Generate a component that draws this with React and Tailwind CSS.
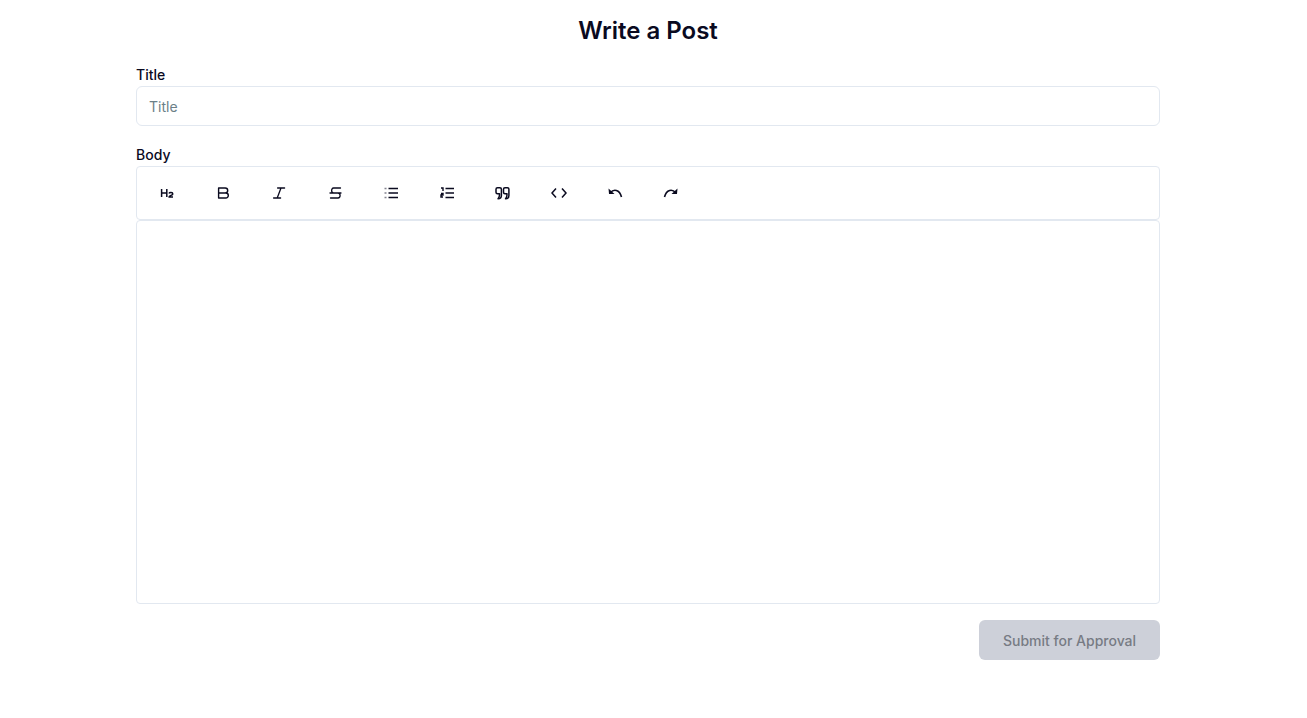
import React from "react";

const Svg = ({ children }) => (
  <svg
    width="16"
    height="16"
    viewBox="0 0 16 16"
    fill="none"
    stroke="currentColor"
    strokeWidth="1.3"
    strokeLinecap="round"
    strokeLinejoin="round"
  >
    {children}
  </svg>
);

// toolbar icons, drawn to match the editor's glyph set
const tools = [
  <Svg>
    <path d="M2.600 4v8M7.800 4v8M2.600 8h5.200" strokeWidth="1.500" strokeLinecap="butt" />
    <path d="M10 8.400c.4-1.200 3.800-1.200 3.800.5 0 1.400-3.600 1.500-3.800 3.100h4" strokeWidth="1.500" strokeLinecap="butt" />
  </Svg>,
  <Svg>
    <path d="M3.600 3h6.600a2.500 2.500 0 0 1 0 5H3.600zM3.600 8h7.200a2.500 2.500 0 0 1 0 5H3.600z" strokeWidth="1.400" />
  </Svg>,
  <Svg>
    <path d="M6.600 3h7M2.600 13h7M10 3 6.200 13" />
  </Svg>,
  <Svg>
    <path d="M13.500 3H6.500C4 3 4 7.800 6.500 7.800M3 8h11M11 8c2.800.2 2.800 5 0 5H3.500" />
  </Svg>,
  <Svg>
    <path d="M5.500 3.500h9.500M5.500 8h9.500M5.500 12.500h9.500" strokeWidth="1.500" strokeLinecap="butt" />
    <path d="M1.500 3.500h2M1.500 8h2M1.500 12.500h2" strokeWidth="1.500" strokeLinecap="butt" strokeOpacity="0.5" />
  </Svg>,
  <Svg>
    <path d="M6.500 3.500h8.500M6.500 8h8.500M6.500 12.500h8.500" strokeWidth="1.500" strokeLinecap="butt" />
    <path d="M2 3h2v3M2 8.500h2v1.500H2v2h2" strokeWidth="1.400" strokeLinecap="butt" strokeLinejoin="miter" />
  </Svg>,
  <Svg>
    <g strokeWidth="1.500">
      <path d="M2.500 2.800h2.400c.9 0 1.500.6 1.500 1.500v6.200c0 2-1.400 3.300-3.400 3.300l1-1.600c.5-.8.500-2.400.5-3.400H2.500c-.9 0-1.500-.6-1.500-1.500V4.300c0-.9.6-1.500 1.500-1.500z" />
      <path d="M10 2.800h2.400c.9 0 1.500.6 1.500 1.500v6.200c0 2-1.400 3.300-3.400 3.300l1-1.600c.5-.8.500-2.400.5-3.400H10c-.9 0-1.500-.6-1.500-1.500V4.300c0-.9.6-1.500 1.500-1.500z" />
    </g>
  </Svg>,
  <Svg>
    <path d="M5 3.500 1 8l4 4.500M11 3.500 15 8l-4 4.500" strokeWidth="1.500" strokeLinecap="butt" strokeLinejoin="miter" />
  </Svg>,
  <Svg>
    <path d="M3.500 7.500C6.500 4 12.500 4 14.500 12" strokeWidth="1.600" strokeLinecap="butt" />
    <path d="M1.500 3.500l.5 5.500H7.500z" fill="currentColor" stroke="none" />
  </Svg>,
  <Svg>
    <path d="M12.500 7.500C9.500 4 3.500 4 1.500 12" strokeWidth="1.600" strokeLinecap="butt" />
    <path d="M14.500 3.500l-.5 5.500H8.500z" fill="currentColor" stroke="none" />
  </Svg>,
];

const App = () => {
  return (
    <div className="w-[1296px] min-h-[718px] bg-white font-['Inter',sans-serif]">
      <div className="max-w-5xl mx-auto pt-4">
        <h1 className="text-2xl font-semibold text-center text-[#0a0a1f] leading-[30px] mb-[19px]">
          Write a Post
        </h1>

        <label className="block text-sm font-medium text-[#0a0a1f] leading-5">Title</label>
        <input
          placeholder="Title"
          className="mt-[1px] w-full h-10 px-3 text-sm border border-[#e2e8f0] rounded-md outline-none placeholder:text-[#6b8088]"
        />

        <label className="block text-sm font-medium text-[#0a0a1f] leading-5 mt-[19px]">Body</label>
        <div className="mt-[1px] flex items-center h-[54px] px-[2px] border border-[#e2e8f0] rounded-[4px]">
          {tools.map((icon, i) => (
            <button key={i} className="w-14 h-10 flex items-center justify-center text-[#0a0a1f]">
              {icon}
            </button>
          ))}
        </div>
        <div className="h-[384px] border border-[#e2e8f0] rounded-[4px]"></div>

        <div className="flex justify-end mt-4">
          <button className="h-10 w-[181px] pt-[2px] rounded-md bg-[#cdd0d9] text-sm font-medium text-[#777b84]">
            Submit for Approval
          </button>
        </div>
      </div>
    </div>
  );
};

export default App;
